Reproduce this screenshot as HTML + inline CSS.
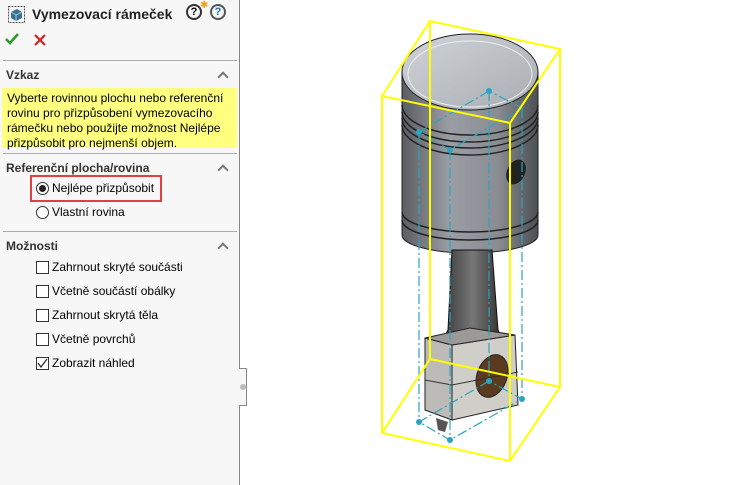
<!DOCTYPE html>
<html><head><meta charset="utf-8"><style>
*{margin:0;padding:0;box-sizing:border-box}
body{width:750px;height:485px;background:#fff;font-family:"Liberation Sans",sans-serif;position:relative;overflow:hidden;font-size:12px;color:#000}
.panel{position:absolute;left:0;top:0;width:240px;height:485px;background:#f7f7f7;border-right:1px solid #888}
.tab{position:absolute;left:239px;top:368px;width:8px;height:38px;background:#f7f7f7;border:1px solid #888;border-left:none}
.tab i{position:absolute;left:1px;top:15px;width:6px;height:6px;border-radius:50%;background:#bbb}
.a{position:absolute;white-space:nowrap}
.sep{position:absolute;left:3px;width:234px;height:1px;background:#aaa}
.h{font-weight:bold;color:#333;font-size:12px}
.chev{position:absolute;left:219px;width:8px;height:8px;border-left:2px solid #777;border-top:2px solid #777;transform:rotate(45deg)}
.msg{position:absolute;left:2px;top:88px;width:235px;height:60px;background:#ffff80;padding:3px 5px;line-height:15px;font-size:12px}
.cb{position:absolute;left:36px;width:13px;height:13px;border:1px solid #333;background:#fff}
.rb{position:absolute;left:36px;width:13px;height:13px;border:1px solid #333;border-radius:50%;background:#fff}
.q{position:absolute;top:4px;width:16px;height:16px;border:2px solid #333;border-radius:50%;font-weight:bold;font-size:11px;text-align:center;line-height:12px}
</style></head><body>
<div class="panel">
 <svg class="a" style="left:8px;top:6px" width="17" height="17" viewBox="0 0 17 17"><rect x="0.5" y="0.5" width="16" height="16" fill="none" stroke="#555" stroke-dasharray="2,1"/><path d="M3 6 L9 3 L14 6 L14 12 L8 15 L3 12Z" fill="#3a6f95"/><path d="M3 6 L8 9 L14 6 M8 9 V15" stroke="#9cc" fill="none"/></svg>
 <div class="a" style="left:32px;top:6px;font-weight:bold;font-size:14px;color:#222">Vymezovací rámeček</div>
 <div class="q" style="left:186px">?</div>
 <div class="a" style="left:200px;top:0px;color:#f90;font-size:10px">✱</div>
 <div class="q" style="left:210px;border-color:#555;color:#1a6fb0">?</div>
 <svg class="a" style="left:5px;top:33px" width="14" height="12"><path d="M1 6 L5 10 L13 1" stroke="#2e9a2e" stroke-width="2.5" fill="none"/></svg>
 <svg class="a" style="left:34px;top:34px" width="12" height="12"><path d="M1 1 L11 11 M11 1 L1 11" stroke="#d42020" stroke-width="2.2"/></svg>
 <div class="sep" style="top:60px"></div>
 <div class="a h" style="left:6px;top:68px">Vzkaz</div><div class="chev" style="top:73px"></div>
 <div class="msg">Vyberte rovinnou plochu nebo referenční<br>rovinu pro přizpůsobení vymezovacího<br>rámečku nebo použijte možnost Nejlépe<br>přizpůsobit pro nejmenší objem.</div>
 <div class="sep" style="top:153px"></div>
 <div class="a h" style="left:6px;top:161px">Referenční plocha/rovina</div><div class="chev" style="top:166px"></div>
 <div class="a" style="left:30px;top:175px;width:132px;height:27px;border:2px solid #e04040"></div>
 <div class="rb" style="top:182px"><div style="position:absolute;left:2px;top:2px;width:7px;height:7px;border-radius:50%;background:#222"></div></div>
 <div class="a" style="left:52px;top:181px">Nejlépe přizpůsobit</div>
 <div class="rb" style="top:206px"></div>
 <div class="a" style="left:52px;top:205px">Vlastní rovina</div>
 <div class="sep" style="top:231px"></div>
 <div class="a h" style="left:6px;top:239px">Možnosti</div><div class="chev" style="top:244px"></div>
 <div class="cb" style="top:261px"></div><div class="a" style="left:52px;top:260px">Zahrnout skryté součásti</div>
 <div class="cb" style="top:285px"></div><div class="a" style="left:52px;top:284px">Včetně součástí obálky</div>
 <div class="cb" style="top:309px"></div><div class="a" style="left:52px;top:308px">Zahrnout skrytá těla</div>
 <div class="cb" style="top:333px"></div><div class="a" style="left:52px;top:332px">Včetně povrchů</div>
 <div class="cb" style="top:357px"><svg width="11" height="11" style="position:absolute;left:0;top:0"><path d="M1 5 L4 9 L10 1" stroke="#333" stroke-width="1.3" fill="none"/></svg></div><div class="a" style="left:52px;top:356px">Zobrazit náhled</div>
</div>
<div class="tab"><i></i></div>
<svg class="a" style="left:0;top:0" width="750" height="485">
<defs>
<linearGradient id="g" x1="0" x2="1"><stop offset="0" stop-color="#5a5e63"/><stop offset=".35" stop-color="#9a9ea4"/><stop offset=".7" stop-color="#8a8e93"/><stop offset="1" stop-color="#4c5055"/></linearGradient>
<linearGradient id="t" x1="0" y1="0" x2="1" y2="1"><stop offset="0" stop-color="#d0d4d9"/><stop offset="1" stop-color="#a8adb2"/></linearGradient>
<linearGradient id="r" x1="0" x2="1"><stop offset="0" stop-color="#333"/><stop offset=".5" stop-color="#777"/><stop offset="1" stop-color="#2a2a2a"/></linearGradient>
</defs>
<path d="M402 72 L402 235 A68 18 0 0 0 538 235 L538 72Z" fill="url(#g)" stroke="#222"/>
<ellipse cx="470" cy="72" rx="68" ry="38" fill="url(#t)" stroke="#222"/>
<ellipse cx="470" cy="74" rx="62" ry="33" fill="none" stroke="#eee" stroke-width="1"/>
<path d="M402 105 A68 30 0 0 0 538 105 M402 112 A68 30 0 0 0 538 112 M402 118 A68 30 0 0 0 538 118 M402 125 A68 30 0 0 0 538 125 M402 212 A68 20 0 0 0 538 212 M402 220 A68 20 0 0 0 538 220" fill="none" stroke="#222" stroke-width="1.5"/>
<ellipse cx="516" cy="172" rx="9" ry="13" transform="rotate(25 516 172)" fill="#222"/>
<path d="M452 250 L492 250 L498 330 L505 345 L440 345 L448 330Z" fill="url(#r)" stroke="#111"/>
<path d="M425 338 L452 345 L452 420 L425 410Z" fill="#bdbbb7" stroke="#222"/>
<path d="M452 345 L515 335 L518 405 L452 420Z" fill="#d0cec9" stroke="#222"/>
<path d="M425 338 L470 328 L515 335 L452 345Z" fill="#9c9a96" stroke="#222"/>
<ellipse cx="492" cy="376" rx="15" ry="22" transform="rotate(20 492 376)" fill="#5a3b20" stroke="#222"/>
<path d="M425 380 L452 385 L518 372" fill="none" stroke="#333"/>
<path d="M436 418 L448 422 L445 432 L438 430Z" fill="#555"/>
<g stroke="#2aa4c0" stroke-width="1.2" fill="none" stroke-dasharray="10,3,2,3">
<path d="M489 91 L419 132 L450 150 L522 108 Z M489 381 L419 422 L450 440 L522 399 Z M489 91 V381 M419 132 V422 M450 150 V440 M522 108 V399"/>
</g>
<g fill="#2aa4c0"><circle cx="489" cy="91" r="3"/><circle cx="419" cy="132" r="3"/><circle cx="450" cy="150" r="3"/><circle cx="489" cy="381" r="3"/><circle cx="419" cy="422" r="3"/><circle cx="450" cy="440" r="3"/><circle cx="522" cy="399" r="3"/></g>
<g stroke="#ffff00" stroke-width="2" fill="none">
<path d="M430 21 L560 49 L510 123 L382 96 Z M430 359 L560 387 L510 461 L382 433 Z M430 21 V359 M560 49 V387 M510 123 V461 M382 96 V433"/>
</g>
</svg>
</body></html>
